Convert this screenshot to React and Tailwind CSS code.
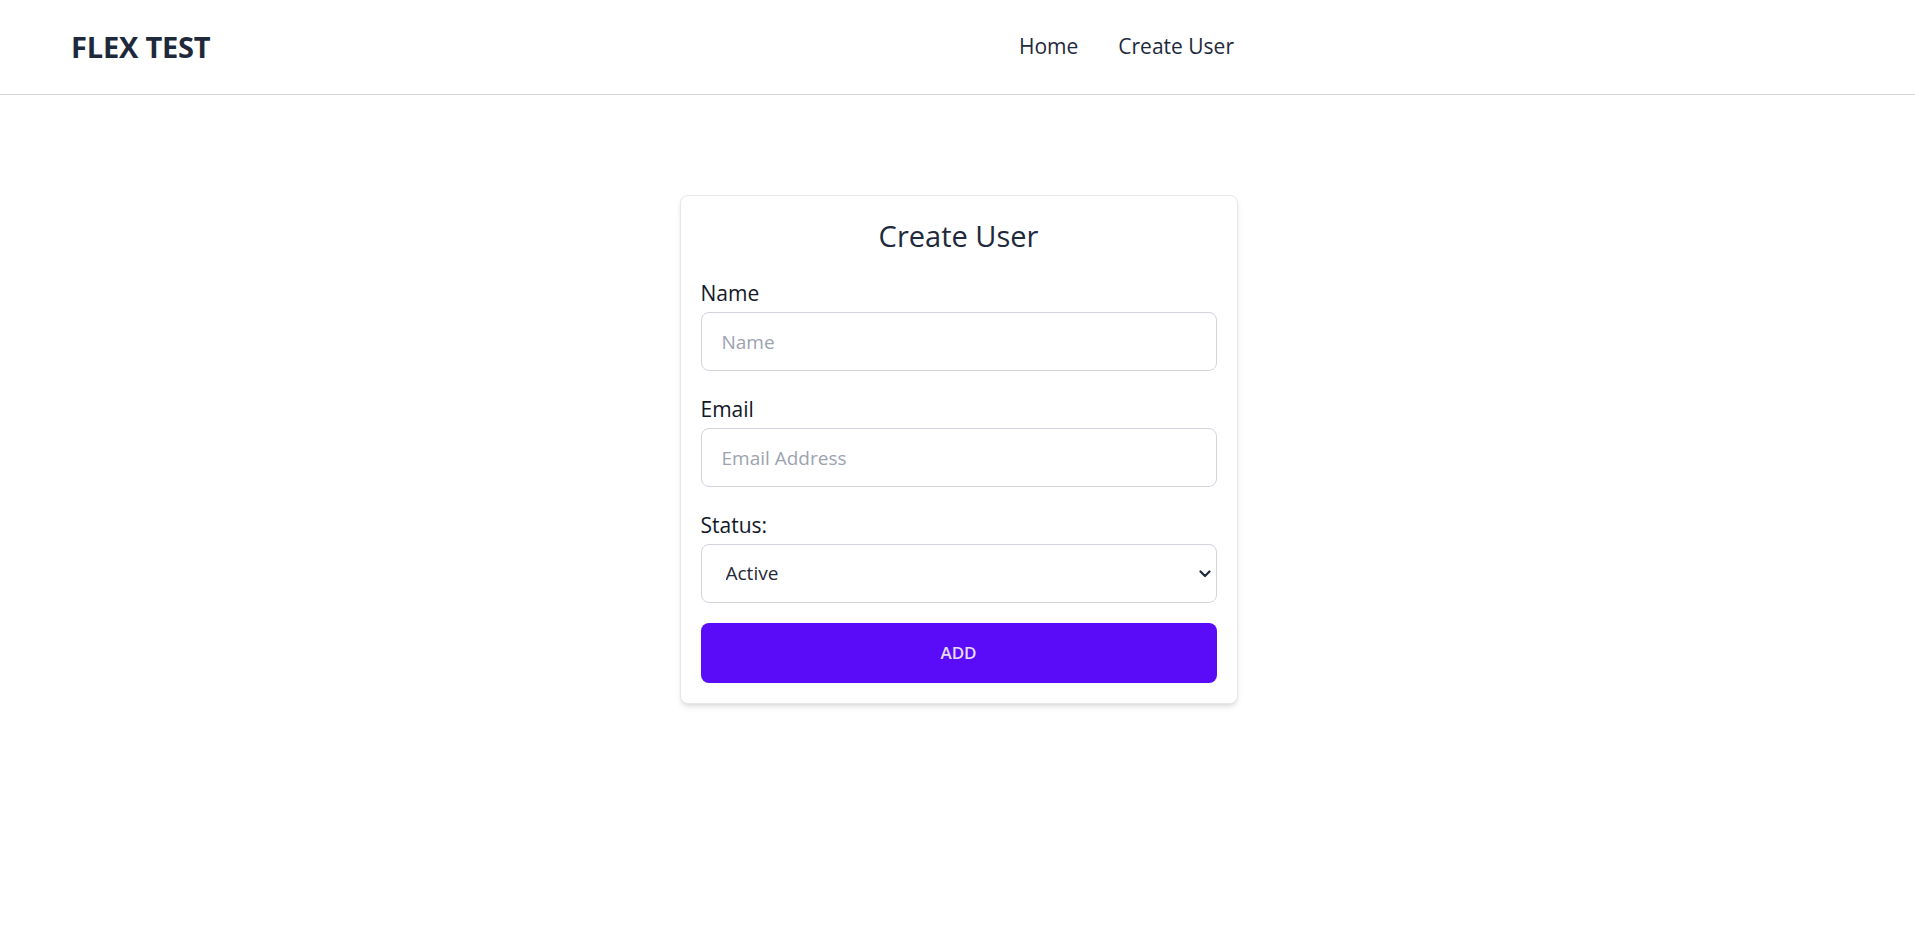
import React, { useState } from 'react';

const font = { fontFamily: '"Open Sans", "Noto Sans", sans-serif' };

function Field({ label, children }) {
    return (
        <div className="flex flex-col">
            <label className="text-[21px] leading-[33px] font-medium text-[#111827] mb-[2px]">{label}</label>
            {children}
        </div>
    );
}

export default function App() {
    const [name, setName] = useState('');
    const [email, setEmail] = useState('');
    const [status, setStatus] = useState('active');

    return (
        <div className="min-h-screen bg-white text-[#1f2937]" style={font}>
            {/* Top bar */}
            <header className="h-[95px] flex items-center border-b border-[#d4d4d4] pl-[71px]">
                <div className="text-[29px] font-bold tracking-[-0.2px] text-[#1e293b]">FLEX TEST</div>
                <nav className="ml-auto mr-[681px] flex items-center gap-[40px] text-[21px] font-medium text-[#1e293b]">
                    <a href="#" className="hover:text-violet-700">Home</a>
                    <a href="#" className="hover:text-violet-700">Create User</a>
                </nav>
            </header>

            {/* Form card */}
            <main className="flex justify-center pt-[100px] pl-[2px]">
                <form
                    onSubmit={(e) => e.preventDefault()}
                    className="w-[558px] bg-white border border-[#e5e7eb] rounded-lg shadow-md p-5"
                >
                    <h2 className="text-[29px] leading-10 text-center font-medium text-[#1e293b] mb-[21px]">Create User</h2>

                    <div className="flex flex-col gap-[22px]">
                        <Field label="Name">
                            <input
                                type="text"
                                value={name}
                                onChange={(e) => setName(e.target.value)}
                                placeholder="Name"
                                className="h-[59px] px-5 text-[19px] border border-[#d1d5db] rounded-lg outline-none placeholder:text-[#9ca3af] focus:border-violet-500"
                            />
                        </Field>

                        <Field label="Email">
                            <input
                                type="email"
                                value={email}
                                onChange={(e) => setEmail(e.target.value)}
                                placeholder="Email Address"
                                className="h-[59px] px-5 text-[19px] border border-[#d1d5db] rounded-lg outline-none placeholder:text-[#9ca3af] focus:border-violet-500"
                            />
                        </Field>

                        <Field label="Status:">
                            <div className="relative">
                                <select
                                    value={status}
                                    onChange={(e) => setStatus(e.target.value)}
                                    className="w-full h-[59px] pl-6 pr-10 text-[19px] text-[#1f2937] bg-white border border-[#d1d5db] rounded-lg outline-none appearance-none"
                                >
                                    <option value="active">Active</option>
                                    <option value="inactive">Inactive</option>
                                </select>
                                <svg
                                    className="absolute right-[6px] top-1/2 -translate-y-1/2 pointer-events-none"
                                    width="12"
                                    height="8"
                                    viewBox="0 0 12 8"
                                    fill="none"
                                >
                                    <path d="M1.5 1.5 L6 6 L10.5 1.5" stroke="#1e293b" strokeWidth="2.2" strokeLinecap="round" strokeLinejoin="round" />
                                </svg>
                            </div>
                        </Field>
                    </div>

                    <button
                        type="submit"
                        className="mt-[20px] w-full h-[60px] rounded-lg bg-[#5a0cf9] text-[#e6dcfd] text-[17px] font-semibold hover:bg-[#4c06d8] transition-colors"
                    >
                        ADD
                    </button>
                </form>
            </main>
        </div>
    );
}
